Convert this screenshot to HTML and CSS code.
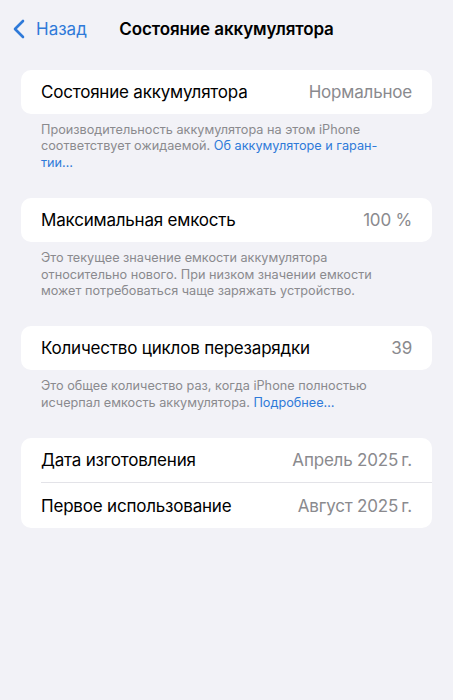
FILE: index.html
```html
<!DOCTYPE html>
<html lang="ru">
<head>
  <meta charset="UTF-8" />
  <title>Состояние аккумулятора</title>
  <link rel="stylesheet" href="styles.css">
</head>
<body>
  <div class="nav">
    <a class="back" href="#">
      <svg class="chevron" width="12" height="20" viewBox="0 0 12 20">
        <path d="M10 2 L2 10 L10 18" fill="none" stroke="currentColor" stroke-width="2.6" stroke-linecap="round" stroke-linejoin="round"/>
      </svg>
      <span>Назад</span>
    </a>
    <div class="title">Состояние аккумулятора</div>
  </div>

  <div class="section">
    <div class="card">
      <div class="row">
        <span class="label">Состояние аккумулятора</span>
        <span class="value">Нормальное</span>
      </div>
    </div>
    <p class="note">Производительность аккумулятора на этом iPhone<br>соответствует ожидаемой. <a href="#">Об аккумуляторе и гаран-<br>тии…</a></p>
  </div>

  <div class="section">
    <div class="card">
      <div class="row">
        <span class="label">Максимальная емкость</span>
        <span class="value">100 %</span>
      </div>
    </div>
    <p class="note">Это текущее значение емкости аккумулятора<br>относительно нового. При низком значении емкости<br>может потребоваться чаще заряжать устройство.</p>
  </div>

  <div class="section">
    <div class="card">
      <div class="row">
        <span class="label">Количество циклов перезарядки</span>
        <span class="value">39</span>
      </div>
    </div>
    <p class="note">Это общее количество раз, когда iPhone полностью<br>исчерпал емкость аккумулятора. <a href="#">Подробнее…</a></p>
  </div>

  <div class="section">
    <div class="card">
      <div class="row">
        <span class="label">Дата изготовления</span>
        <span class="value">Апрель 2025&#8239;г.</span>
      </div>
      <div class="row">
        <span class="label">Первое использование</span>
        <span class="value">Август 2025&#8239;г.</span>
      </div>
    </div>
  </div>
</body>
</html>
```

FILE: styles.css
```css
body {
  margin: 0;
  background-color: #f2f2f7;
  font-family: Inter, "Noto Sans", sans-serif;
  color: #000;
  height: 100vh;
}
a {
  color: #2f7ad9;
  text-decoration: none;
}
.nav {
  position: relative;
  height: 58px;
  display: flex;
  align-items: center;
  justify-content: center;
}
.back {
  position: absolute;
  left: 13px;
  top: 19px;
  display: flex;
  align-items: center;
  gap: 11px;
  font-size: 17px;
}
.chevron {
  display: block;
}
.title {
  font-size: 17px;
  font-weight: 600;
  letter-spacing: -0.1px;
}
.section {
  margin: 12px 21px 0;
}
.section + .section {
  margin-top: 27px;
}
.card {
  background: white;
  border-radius: 10px;
  overflow: hidden;
}
.row {
  height: 44px;
  margin-left: 20px;
  padding-right: 20px;
  display: flex;
  align-items: center;
  justify-content: space-between;
  font-size: 17px;
  letter-spacing: -0.2px;
}
.row + .row {
  height: 45px;
  border-top: 1px solid #e3e3e8;
}
.value {
  color: #8a8a8e;
}
.note {
  margin: 8px 20px 0;
  font-size: 12.7px;
  line-height: 16.4px;
  color: #8a8a8e;
  white-space: nowrap;
}
```
